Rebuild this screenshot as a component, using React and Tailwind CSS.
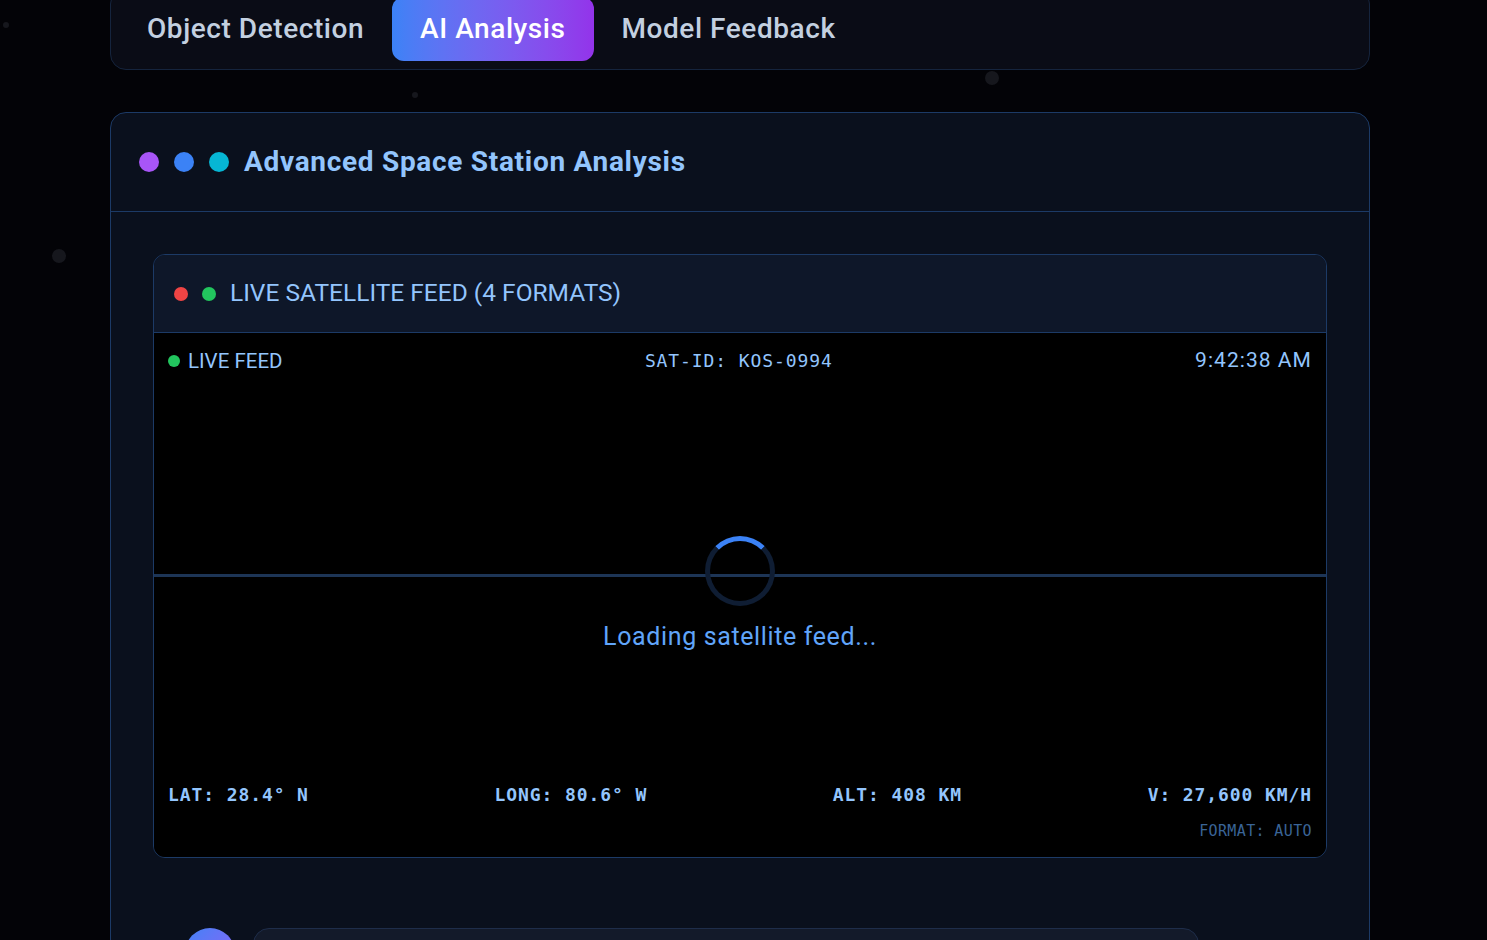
import React from "react";

const sans = { fontFamily: "Roboto, 'Noto Sans', sans-serif" };
const mono = { fontFamily: "'DejaVu Sans Mono', 'Liberation Mono', monospace" };

const stars = [
  { x: 3, y: 22, s: 6 },
  { x: 52, y: 249, s: 14 },
  { x: 985, y: 71, s: 14 },
  { x: 412, y: 92, s: 6 },
];

const tabs = ["Object Detection", "AI Analysis", "Model Feedback"];

const App = () => {
  const active = "AI Analysis";

  return (
    <div className="relative min-h-screen h-[940px] overflow-hidden bg-[#030307]" style={sans}>
      {stars.map((s, i) => (
        <div
          key={i}
          className="absolute rounded-full bg-[#16171d]"
          style={{ left: s.x, top: s.y, width: s.s, height: s.s }}
        />
      ))}

      <div className="relative ml-[110px] w-[1260px]">
        {/* tab bar */}
        <div className="-mt-[12px] flex rounded-2xl border border-[#15243d] bg-[#0a0c16] p-2">
          {tabs.map((t) => (
            <button
              key={t}
              className={`h-16 rounded-xl px-7 text-[28px] font-medium tracking-[0.02em] ${
                t === active
                  ? "bg-gradient-to-r from-[#3b82f6] to-[#9333ea] text-white"
                  : "text-[#c3d0e0]"
              }`}
            >
              {t}
            </button>
          ))}
        </div>

        {/* main card */}
        <div className="mt-[42px] rounded-2xl border border-[#1c3a66] bg-[#0a101d]">
          <div className="flex h-[99px] items-center gap-[15px] border-b border-[#1c3a66] px-7">
            <span className="h-5 w-5 rounded-full bg-[#a855f7]" />
            <span className="h-5 w-5 rounded-full bg-[#3b82f6]" />
            <span className="h-5 w-5 rounded-full bg-[#06b6d4]" />
            <h2 className="text-[28px] font-bold tracking-wide text-[#93c5fd]">
              Advanced Space Station Analysis
            </h2>
          </div>

          <div className="px-[42px] pt-[42px]">
            <div className="overflow-hidden rounded-xl border border-[#1c3a66]">
              <div className="flex h-[78px] items-center gap-3.5 border-b border-[#1c3a66] bg-[#0e1729] px-5">
                <span className="h-3.5 w-3.5 rounded-full bg-[#ef4444]" />
                <span className="h-3.5 w-3.5 rounded-full bg-[#22c55e]" />
                <span className="text-[24.5px] text-[#93c5fd]">LIVE SATELLITE FEED (4 FORMATS)</span>
              </div>

              <div className="relative flex h-[524px] flex-col bg-black p-3.5 pb-[17px]">
                <div className="absolute left-0 right-0 top-[241px] h-[3px] bg-[#1d3556]" />

                <div className="relative flex h-7 items-center justify-between">
                  <div className="flex items-center gap-2">
                    <span className="h-3 w-3 rounded-full bg-[#22c55e]" />
                    <span className="text-[20.5px] text-[#93c5fd]">LIVE FEED</span>
                  </div>
                  <span className="text-lg tracking-wider text-[#93c5fd]" style={mono}>
                    SAT-ID: KOS-0994
                  </span>
                  <span className="text-[21px] tracking-wider text-[#93c5fd]">9:42:38 AM</span>
                </div>

                <div className="relative flex flex-1 flex-col items-center justify-center gap-[12px] pt-[36px]">
                  <div className="h-[70px] w-[70px] rounded-full border-[5px] border-[#0f1d33] border-t-[#3b82f6]" />
                  <span className="text-[25px] tracking-wide text-[#60a5fa]">Loading satellite feed...</span>
                </div>

                <div className="relative flex h-7 items-center justify-between font-bold text-[#93c5fd]" style={mono}>
                  <span className="text-lg tracking-wider">LAT: 28.4° N</span>
                  <span className="text-lg tracking-wider">LONG: 80.6° W</span>
                  <span className="text-lg tracking-wider">ALT: 408 KM</span>
                  <span className="text-lg tracking-wider">V: 27,600 KM/H</span>
                </div>
                <div className="relative mt-[11px] flex h-5 justify-end">
                  <span className="text-[15px] tracking-wide text-[#3a6496]" style={mono}>
                    FORMAT: AUTO
                  </span>
                </div>
              </div>
            </div>

            <div className="mt-[70px] flex gap-[18px] pl-8">
              <div className="h-[50px] w-[50px] shrink-0 rounded-full bg-gradient-to-br from-[#3b82f6] to-[#8b5cf6]" />
              <div className="h-[80px] w-[946px] rounded-2xl border border-[#1e2d4a] bg-[#131a2a]" />
            </div>
          </div>
        </div>
      </div>
    </div>
  );
};

export default App;
